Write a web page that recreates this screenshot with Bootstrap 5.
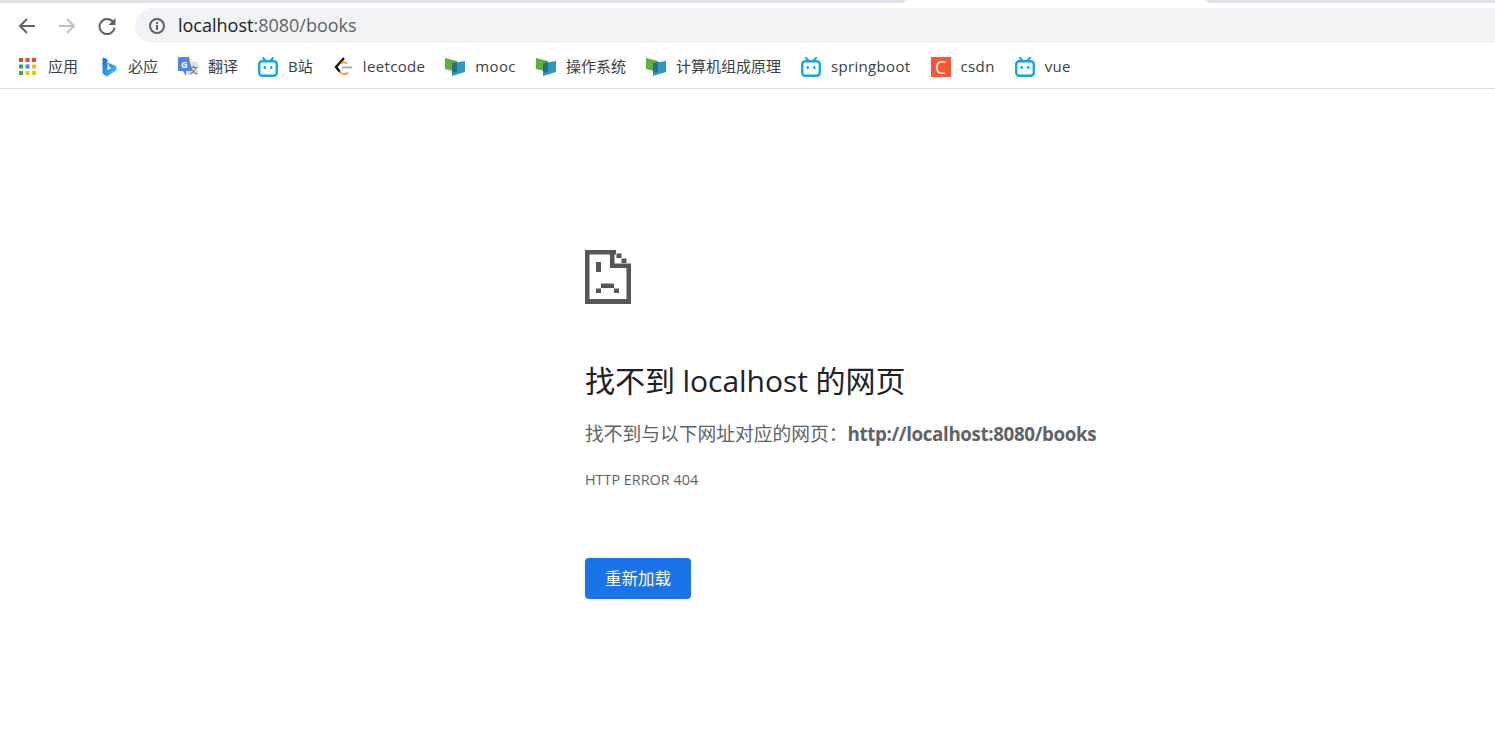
<!DOCTYPE html>
<html lang="zh-CN">

<head>
    <meta charset="UTF-8">
    <meta name="viewport" content="width=device-width, initial-scale=1.0">
    <title>localhost:8080/books</title>
    <link href="https://cdn.jsdelivr.net/npm/bootstrap@5.3.0/dist/css/bootstrap.min.css" rel="stylesheet">
    <style>
        body {
            font-family: "Open Sans", "Noto Sans CJK SC", sans-serif;
            color: #202124;
            background: #fff;
        }

        /* browser chrome */
        .tab-strip { height: 3px; }
        .tab-left { width: 905px; background: #dee1e6; border-bottom-right-radius: 4px; }
        .tab-gap { width: 302px; }
        .tab-right { background: #dee1e6; border-bottom-left-radius: 4px; }
        .tool-row { height: 35px; margin-top: 5px; padding-left: 7px; }
        .nav-btn { width: 40px; height: 35px; }
        .omnibox {
            height: 35px;
            margin-left: 8px;
            padding-left: 13px;
            background: #f1f3f4;
            border-radius: 18px 0 0 18px;
            font-size: 18px;
            color: #5f6368;
        }
        .omnibox b { font-weight: 400; color: #202124; }
        .info-icon { margin-right: 12px; }
        .mark-row {
            height: 46px;
            padding: 2px 0 0 18px;
            border-bottom: 1px solid #dadce0;
            font-size: 15px;
            color: #3c4043;
        }
        .mark-item { margin-right: 20px; white-space: nowrap; }
        .mark-icon { width: 20px; height: 20px; flex: none; margin-right: 10px; }
        .mark-latin { letter-spacing: .35px; }
        .csdn-icon {
            background: #fc5531;
            color: #fff;
            font-size: 18px;
            line-height: 20px;
            text-align: center;
        }

        /* error page */
        .error-wrap { padding: 161px 0 0 585px; }
        .sad-icon { display: block; width: 46px; height: 54px; }
        .error-title { font-size: 30px; font-weight: 400; line-height: 40px; margin: 57px 0 0; letter-spacing: -.05px; }
        .error-text { font-size: 18.75px; line-height: 28px; color: #5f6368; margin: 19px 0 0; white-space: nowrap; }
        .error-text b { font-weight: 700; letter-spacing: -.37px; }
        .error-code { font-size: 14.4px; line-height: 20px; color: #5f6368; margin: 22px 0 0; }
        .reload-btn {
            width: 106px;
            height: 41px;
            margin-top: 68px;
            padding: 2px 0 0;
            font-size: 16.5px;
            border-radius: 4px;
            border: 0;
            background: #1a73e8;
            color: #fff;
        }
    </style>
</head>

<body>

    <svg width="0" height="0" class="position-absolute">
        <defs>
            <symbol id="bili" viewBox="0 0 20 20">
                <path d="M5 1l3 3M15 1l-3 3" stroke="#12a9dc" stroke-width="2" stroke-linecap="round" fill="none"/>
                <rect x="1.200" y="4.200" width="17.600" height="14.600" rx="3" fill="#fff" stroke="#12a9dc" stroke-width="2.400"/>
                <rect x="5.500" y="9" width="2.400" height="3" rx="1" fill="#12a9dc"/>
                <rect x="12.100" y="9" width="2.400" height="3" rx="1" fill="#12a9dc"/>
            </symbol>
            <symbol id="book" viewBox="0 0 20 20">
                <path d="M0 1l12 3v11L0 12z" fill="#5fb13c"/>
                <path d="M7 6l13-2v11L7 19z" fill="#2f96c8"/>
                <path d="M7 6l5-.7V15l-5 .8z" fill="#2a6f7e"/>
            </symbol>
        </defs>
    </svg>

    <!-- Browser toolbar -->
    <header>
        <div class="tab-strip d-flex">
            <div class="tab-left"></div>
            <div class="tab-gap"></div>
            <div class="tab-right flex-grow-1"></div>
        </div>
        <div class="tool-row d-flex align-items-center">
            <div class="nav-btn d-flex align-items-center justify-content-center">
                <svg width="20" height="20" viewBox="0 0 20 20" fill="none" stroke="#5f6368" stroke-width="2">
                    <path d="M18 10H3M10 3l-7 7 7 7"/>
                </svg>
            </div>
            <div class="nav-btn d-flex align-items-center justify-content-center">
                <svg width="20" height="20" viewBox="0 0 20 20" fill="none" stroke="#bdc1c6" stroke-width="2">
                    <path d="M2 10h15M10 3l7 7-7 7"/>
                </svg>
            </div>
            <div class="nav-btn d-flex align-items-center justify-content-center">
                <svg width="20" height="20" viewBox="0 0 20 20" fill="none">
                    <path d="M16 6A7.500 7.500 0 1 0 17.500 11.500" stroke="#5f6368" stroke-width="2"/>
                    <path d="M18.500 2v7h-7z" fill="#5f6368"/>
                </svg>
            </div>
            <div class="omnibox flex-grow-1 d-flex align-items-center">
                <svg class="info-icon flex-shrink-0" width="18" height="18" viewBox="0 0 18 18">
                    <circle cx="9" cy="9" r="7" fill="none" stroke="#5f6368" stroke-width="2"/>
                    <path d="M8 8h2v5H8zM8 5h2v2H8z" fill="#5f6368"/>
                </svg>
                <span><b>localhost</b>:8080/books</span>
            </div>
        </div>
        <nav class="mark-row d-flex align-items-center">
            <div class="mark-item d-flex align-items-center">
                <svg class="mark-icon" viewBox="0 0 20 20">
                    <path d="M1 1h4v4H1zM7.500 1h4v4h-4zM14 1h4v4h-4z" fill="#ea4335"/>
                    <path d="M1 7.500h4v4H1zM1 14h4v4H1z" fill="#34a853"/>
                    <path d="M7.500 7.500h4v4h-4z" fill="#4285f4"/>
                    <path d="M14 7.500h4v4h-4zM7.500 14h4v4h-4zM14 14h4v4h-4z" fill="#fbbc04"/>
                </svg>
                <span>应用</span>
            </div>
            <div class="mark-item d-flex align-items-center">
                <svg class="mark-icon" viewBox="0 0 20 20">
                    <defs>
                        <linearGradient id="bingFill" x1="0" y1="0" x2="1" y2="1">
                            <stop offset="0" stop-color="#1a6fe6"/>
                            <stop offset=".6" stop-color="#2b9cf0"/>
                            <stop offset="1" stop-color="#45dcee"/>
                        </linearGradient>
                    </defs>
                    <path d="M5 1l4 1.500V14l5.500-3-2.500-1.200-1.500-3.300L18 9.500V13l-9 6-4-2.500z" fill="url(#bingFill)" stroke="url(#bingFill)" stroke-linejoin="round"/>
                </svg>
                <span>必应</span>
            </div>
            <div class="mark-item d-flex align-items-center">
                <svg class="mark-icon" viewBox="0 0 20 20">
                    <path d="M8 5h12v13H8z" fill="#dfe1e5"/>
                    <text x="11" y="16" font-size="9" fill="#5f6368" font-family="Noto Sans CJK SC">文</text>
                    <path d="M1 0h10l3 14H8v5l-3-5H1a1 1 0 0 1-1-1V1a1 1 0 0 1 1-1z" fill="#4f86ec"/>
                    <text x="3" y="10.500" font-size="9" font-weight="700" fill="#fff">G</text>
                </svg>
                <span>翻译</span>
            </div>
            <div class="mark-item d-flex align-items-center">
                <svg class="mark-icon"><use href="#bili"/></svg>
                <span>B站</span>
            </div>
            <div class="mark-item d-flex align-items-center">
                <svg class="mark-icon" viewBox="0 0 20 20" fill="none">
                    <path d="M11 1L3 10l4 5" stroke="#111" stroke-width="2.400"/>
                    <path d="M8 6.500c2-2 4-1.500 6 0" stroke="#f0a020" stroke-width="1.800"/>
                    <path d="M6.500 14.500c3 4 6 3.500 8.500 1" stroke="#f0a020" stroke-width="1.800"/>
                    <path d="M9 10.500h10" stroke="#a8a8a8" stroke-width="1.800"/>
                </svg>
                <span class="mark-latin">leetcode</span>
            </div>
            <div class="mark-item d-flex align-items-center">
                <svg class="mark-icon"><use href="#book"/></svg>
                <span class="mark-latin">mooc</span>
            </div>
            <div class="mark-item d-flex align-items-center">
                <svg class="mark-icon"><use href="#book"/></svg>
                <span>操作系统</span>
            </div>
            <div class="mark-item d-flex align-items-center">
                <svg class="mark-icon"><use href="#book"/></svg>
                <span>计算机组成原理</span>
            </div>
            <div class="mark-item d-flex align-items-center">
                <svg class="mark-icon"><use href="#bili"/></svg>
                <span class="mark-latin">springboot</span>
            </div>
            <div class="mark-item d-flex align-items-center">
                <span class="mark-icon csdn-icon">C</span>
                <span class="mark-latin">csdn</span>
            </div>
            <div class="mark-item d-flex align-items-center">
                <svg class="mark-icon"><use href="#bili"/></svg>
                <span class="mark-latin">vue</span>
            </div>
        </nav>
    </header>

    <!-- Error page -->
    <main class="error-wrap">
        <svg class="sad-icon" viewBox="0 0 46 54" fill="#54565a">
            <path d="M0 0h31v4.500H4.500v44.500h37V14h4.500v40H0z"/>
            <path d="M25 0h4.500v13.500H46V18H25z"/>
            <path d="M31.500 3.500h5v4.500h-5zM36.500 8.500h5v4.500h-5z"/>
            <path d="M11 12h5v10h-5z"/>
            <path d="M16 33.500h13v4.500H16zM11 38.500h5v4.500h-5zM29 38.500h5v4.500h-5z"/>
        </svg>
        <h1 class="error-title">找不到 localhost 的网页</h1>
        <p class="error-text">找不到与以下网址对应的网页：<b>http://localhost:8080/books</b></p>
        <div class="error-code">HTTP ERROR 404</div>
        <button type="button" class="btn reload-btn d-block">重新加载</button>
    </main>

    <script src="https://cdn.jsdelivr.net/npm/bootstrap@5.3.0/dist/js/bootstrap.bundle.min.js"></script>

</body>

</html>
